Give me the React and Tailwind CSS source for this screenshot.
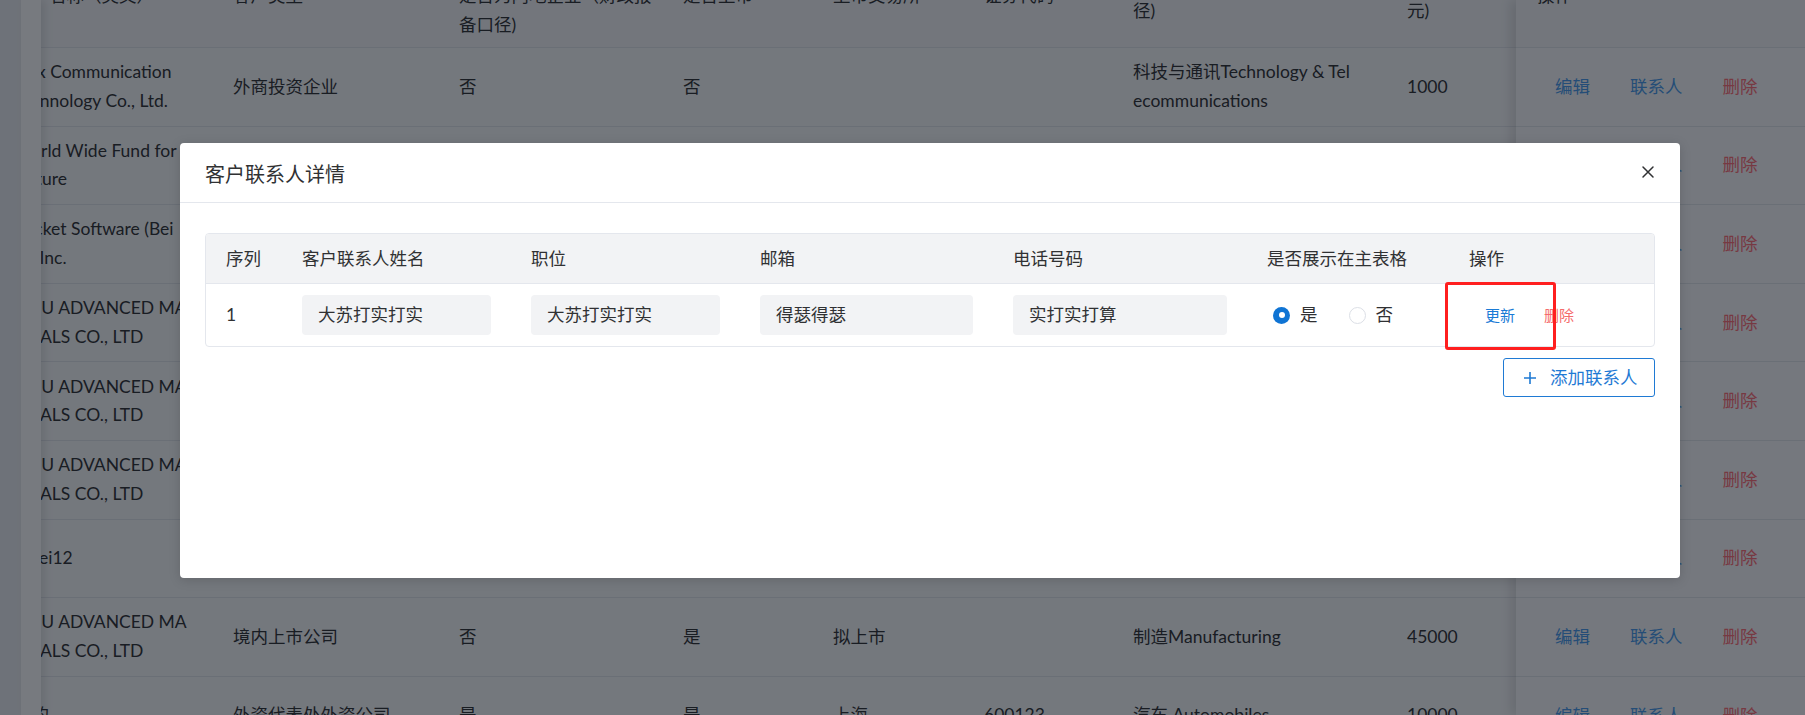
import React from "react";

const bgCols = "grid grid-cols-[219px_226px_224px_150px_151px_149px_274px_119px]";

function Lines({ lines }) {
  return (
    <div className="flex flex-col leading-[28.6px]">
      {lines.map((l, i) => (
        <span key={i} className="whitespace-nowrap">{l}</span>
      ))}
    </div>
  );
}

const headerCells = [
  ["客户名称（英文）"],
  ["客户类型"],
  ["客户是否为", "是否为内地企业（财政报", "备口径)"],
  ["是否上市"],
  ["上市交易所"],
  ["证券代码"],
  ["行业（财政报备口", "径)"],
  ["注册资本（万", "元)"],
];

const adv = ["HOU ADVANCED MA", "ERIALS CO., LTD"];

const rows = [
  [["Linx Communication", "Tecnnology Co., Ltd."], ["外商投资企业"], ["否"], ["否"], [""], [""], ["科技与通讯Technology & Tel", "ecommunications"], ["1000"]],
  [["World Wide Fund for", "Nature"], ["非营利组织"], ["否"], ["否"], [""], [""], ["公益Public Welfare"], ["500"]],
  [["Rocket Software (Bei", "Co.Inc."], ["外商投资企业"], ["否"], ["否"], [""], [""], ["科技与通讯Technology"], ["2000"]],
  [adv, ["境内上市公司"], ["否"], ["是"], ["拟上市"], [""], ["制造Manufacturing"], ["45000"]],
  [adv, ["境内上市公司"], ["否"], ["是"], ["拟上市"], [""], ["制造Manufacturing"], ["45000"]],
  [adv, ["境内上市公司"], ["否"], ["是"], ["拟上市"], [""], ["制造Manufacturing"], ["45000"]],
  [["Awei12"], ["内资企业"], ["是"], ["否"], [""], [""], ["服务Service"], ["100"]],
  [adv, ["境内上市公司"], ["否"], ["是"], ["拟上市"], [""], ["制造Manufacturing"], ["45000"]],
  [["我的"], ["外资代表处外资公司"], ["是"], ["是"], ["上海"], ["600123"], ["汽车 Automobiles"], ["10000"]],
];

function BackgroundPage() {
  return (
    <div className="relative z-0 flex h-[715px] w-full overflow-hidden bg-white text-[17.5px] text-[#303133]">
      <div className="w-[21px] shrink-0 bg-[#eceef1]" />
      <div className="relative z-10 w-[20px] shrink-0 bg-white shadow-[4px_0_8px_rgba(0,0,0,0.10)]" />
      <div className="flex-1 overflow-hidden">
        <div className="-ml-[37px] w-[1512px]">
          <div className={`${bgCols} -mt-[54px] h-[102px] items-center border-b border-[#e3e6ec] bg-[#f5f6f8]`}>
            {headerCells.map((c, i) => (
              <div key={i} className="pl-[10px]">
                <Lines lines={c} />
              </div>
            ))}
          </div>
          {rows.map((r, ri) => (
            <div key={ri} className={`${bgCols} h-[78.6px] items-center border-b border-[#e3e6ec] bg-[#f9fafb]`}>
              {r.map((c, ci) => (
                <div key={ci} className="pl-[10px]">
                  <Lines lines={c} />
                </div>
              ))}
            </div>
          ))}
        </div>
      </div>
      <div className="relative z-10 w-[289px] shrink-0 bg-[#fafbfc] shadow-[-6px_0_10px_rgba(0,0,0,0.10)]">
        <div className="-mt-[54px] flex h-[102px] items-center border-b border-[#e3e6ec] bg-[#f5f6f8] pl-[21px]">
          操作
        </div>
        {rows.map((r, ri) => (
          <div key={ri} className="flex h-[78.6px] items-center gap-[40px] border-b border-[#e3e6ec] pl-[39px] leading-[28px]">
            <span className="text-[#4a9ced]">编辑</span>
            <span className="text-[#4a9ced]">联系人</span>
            <span className="text-[#ff6f78]">删除</span>
          </div>
        ))}
      </div>
    </div>
  );
}

const modalCols = "grid grid-cols-[76px_229px_229px_253px_254px_202px_205px]";

function Input({ value }) {
  return (
    <div className="flex h-[40px] w-full items-center rounded-[4px] bg-[#f2f3f5] px-[16px] leading-[24px]">
      {value}
    </div>
  );
}

function Modal() {
  return (
    <div className="absolute left-[180px] top-[143px] z-30 h-[435px] w-[1500px] rounded-[4px] bg-white text-[#303133] shadow-[0_2px_12px_rgba(0,0,0,0.15)]">
      <div className="flex h-[60px] items-center justify-between border-b border-[#e4e7ed] pl-[25px] pr-[22px] pt-[2px]">
        <span className="text-[20px] leading-[28px]">客户联系人详情</span>
        <svg width="20" height="20" viewBox="0 0 20 20" className="-mt-[4px]">
          <path d="M5 5 L15 15 M15 5 L5 15" stroke="#303133" strokeWidth="1.5" strokeLinecap="round" />
        </svg>
      </div>
      <div className="px-[25px] pt-[30px] text-[17.5px]">
        <div className="overflow-hidden rounded-[4px] border border-[#e4e7ed]">
          <div className={`${modalCols} h-[50px] items-center border-b border-[#e4e7ed] bg-[#f2f3f5] leading-[24px]`}>
            <div className="pl-[20px]">序列</div>
            <div className="pl-[20px]">客户联系人姓名</div>
            <div className="pl-[20px]">职位</div>
            <div className="pl-[20px]">邮箱</div>
            <div className="pl-[20px]">电话号码</div>
            <div className="pl-[20px]">是否展示在主表格</div>
            <div className="pl-[20px]">操作</div>
          </div>
          <div className={`${modalCols} h-[62px] items-center leading-[24px]`}>
            <div className="pl-[20px]">1</div>
            <div className="px-[20px]"><Input value="大苏打实打实" /></div>
            <div className="px-[20px]"><Input value="大苏打实打实" /></div>
            <div className="px-[20px]"><Input value="得瑟得瑟" /></div>
            <div className="px-[20px]"><Input value="实打实打算" /></div>
            <div className="flex items-center pl-[26px]">
              <span className="flex h-[17px] w-[17px] items-center justify-center rounded-full bg-[#0f74d4]">
                <span className="h-[6px] w-[6px] rounded-full bg-white" />
              </span>
              <span className="ml-[10px]">是</span>
              <span className="ml-[31px] h-[17px] w-[17px] rounded-full border border-[#dcdfe6] bg-white" />
              <span className="ml-[10px]">否</span>
            </div>
            <div className="flex items-center pl-[36px] text-[15px]">
              <span className="text-[#1a7bd6]">更新</span>
              <span className="ml-[29px] text-[#f56c6c]">删除</span>
            </div>
          </div>
        </div>
        <div className="mt-[11px] flex justify-end">
          <div className="flex h-[39px] w-[152px] items-center gap-[13px] rounded-[3px] border border-[#1f7ad4] pl-[19px] text-[#1f7ad4] leading-[24px]">
            <svg width="14" height="14" viewBox="0 0 14 14">
              <path d="M7 1 V13 M1 7 H13" stroke="#1f7ad4" strokeWidth="1.6" />
            </svg>
            <span>添加联系人</span>
          </div>
        </div>
      </div>
      <div className="absolute left-[1265px] top-[139px] h-[68px] w-[111px] rounded-[3px] border-[3px] border-[#ff1f1f]" />
    </div>
  );
}

export default function App() {
  return (
    <div className="relative h-[715px] w-full overflow-hidden font-['Lato','Noto_Sans_CJK_SC',sans-serif]">
      <BackgroundPage />
      <div className="absolute inset-0 z-20 bg-[rgba(8,12,22,0.55)]" />
      <Modal />
    </div>
  );
}
